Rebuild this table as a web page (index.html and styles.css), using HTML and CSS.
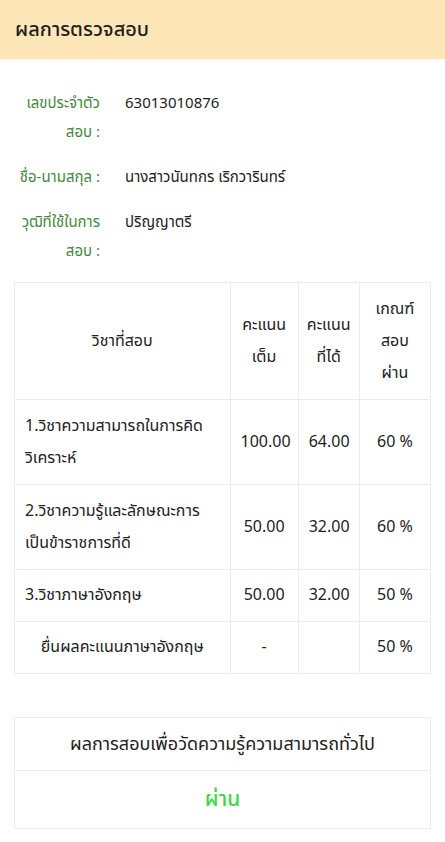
FILE: index.html
```html
<!DOCTYPE html>
<html lang="th">
<head>
<meta charset="utf-8">
<link rel="stylesheet" href="styles.css">
</head>
<body>
<header class="topbar"><h1 class="title">ผลการตรวจสอบ</h1></header>
<main class="content">
  <dl class="info">
    <div class="info-row"><dt class="label"><span class="ln">เลขประจำตัว</span><span class="ln">สอบ :</span></dt><dd class="value">63013010876</dd></div>
    <div class="info-row"><dt class="label"><span class="ln">ชื่อ-นามสกุล :</span></dt><dd class="value">นางสาวนันทกร เริกวารินทร์</dd></div>
    <div class="info-row"><dt class="label"><span class="ln">วุฒิที่ใช้ในการ</span><span class="ln">สอบ :</span></dt><dd class="value">ปริญญาตรี</dd></div>
  </dl>
  <table class="scores">
    <colgroup><col class="c1"><col class="c2"><col class="c3"><col class="c4"></colgroup>
    <thead>
      <tr><th>วิชาที่สอบ</th><th>คะแนนเต็ม</th><th>คะแนนที่ได้</th><th class="crit">เกณฑ์สอบผ่าน</th></tr>
    </thead>
    <tbody>
      <tr><td class="subj">1.วิชาความสามารถในการคิดวิเคราะห์</td><td>100.00</td><td>64.00</td><td>60 %</td></tr>
      <tr><td class="subj">2.วิชาความรู้และลักษณะการเป็นข้าราชการที่ดี</td><td>50.00</td><td>32.00</td><td>60 %</td></tr>
      <tr class="single"><td class="subj">3.วิชาภาษาอังกฤษ</td><td>50.00</td><td>32.00</td><td>50 %</td></tr>
      <tr class="single"><td class="subj center">ยื่นผลคะแนนภาษาอังกฤษ</td><td>-</td><td></td><td>50 %</td></tr>
    </tbody>
  </table>
  <table class="result">
    <tr><th>ผลการสอบเพื่อวัดความรู้ความสามารถทั่วไป</th></tr>
    <tr><td class="pass">ผ่าน</td></tr>
  </table>
</main>
</body>
</html>
```
FILE: styles.css
```css
* { box-sizing: border-box; }
html, body { margin: 0; padding: 0; background: #fff; }
body {
  font-family: "Noto Sans Thai", "Noto Sans", "Liberation Sans", sans-serif;
  color: #222;
  font-size: 15px;
  width: 445px;
}
.topbar {
  background: #fde7b9;
  height: 59px;
  display: flex;
  align-items: center;
  padding: 0 15px;
  box-shadow: 0 2px 3px rgba(0,0,0,0.04);
}
.title { margin: 0; font-size: 20px; font-weight: 500; color: #1f1f1f; }
.content { padding: 30px 14px 0 14px; }
.info { margin: 0 0 8px 0; }
.info-row { display: flex; margin-bottom: 16px; line-height: 29px; }
.label {
  width: 86px; flex: none; margin: 0;
  display: flex; flex-direction: column; align-items: flex-end;
  color: #3f8a3c; font-size: 15px; white-space: nowrap;
}
.value { margin: 0 0 0 25px; font-size: 15px; color: #222; }
table { border-collapse: collapse; width: 100%; table-layout: fixed; }
.scores col.c1 { width: 215px; }
.scores col.c2 { width: 68px; }
.scores col.c3 { width: 61px; }
.scores col.c4 { width: 71px; }
.scores th, .scores td {
  border: 1px solid #ececec;
  padding: 10px 10px;
  line-height: 32px;
  font-size: 16px;
  font-weight: 400;
  text-align: center;
  vertical-align: middle;
}
.scores th { padding: 10px 4px; }
.scores th.crit { padding: 10px 14px; }
.scores tr.single td { padding-top: 9px; padding-bottom: 10px; }
.scores td.subj { text-align: left; padding-left: 10px; }
.scores td.subj.center { text-align: center; }
.result { margin-top: 43px; }
.result th, .result td {
  border: 1px solid #ececec;
  text-align: center;
  font-size: 18px;
  font-weight: 400;
  height: 53px;
}
.result td.pass { color: #3fd83f; font-size: 21px; font-weight: 500; height: 58px; }
```
